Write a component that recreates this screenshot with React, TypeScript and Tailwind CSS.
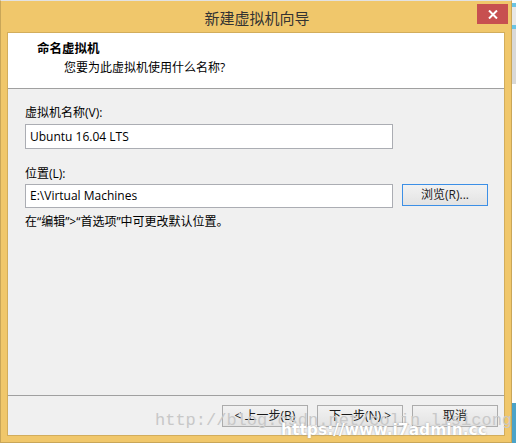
import React from "react";

const font = "font-['Open_Sans','Noto_Sans_CJK_SC',sans-serif]";

function Button({ children, primary }: { children: React.ReactNode; primary?: boolean }) {
  return (
    <button
      className={`h-[22px] w-[86px] border text-[12px] text-[#1a1a1a] bg-gradient-to-b from-[#f2f2f2] to-[#e3e3e3] ${
        primary ? "border-[#3c8fe6]" : "border-[#acacac]"
      }`}
    >
      {children}
    </button>
  );
}

export default function App() {
  return (
    <div className={`relative flex w-[516px] h-[443px] bg-white overflow-hidden ${font}`}>
      {/* Wizard window */}
      <div className="flex flex-col w-[512px] h-[443px] bg-[#f0c76b] border border-[#c9a658] border-t-[#e2e2e2]">
        {/* Title bar */}
        <div className="relative flex items-center justify-center h-[31px] shrink-0">
          <span className="text-[15px] text-[#333] pt-[3px] pl-[2px]">新建虚拟机向导</span>
          <div className="absolute top-[3px] right-[3px] w-[31px] h-[20px] bg-[#c75050] flex items-center justify-center">
            <svg width="10" height="9" viewBox="0 0 10 9">
              <path d="M1 0.5 L9 8.5 M9 0.5 L1 8.5" stroke="white" strokeWidth="2" />
            </svg>
          </div>
        </div>

        {/* Content */}
        <div className="flex flex-col flex-1 mx-[6px] mb-[6px] border border-[#d2ad5c] bg-[#f0f0f0]">
          {/* Header */}
          <div className="h-[56px] shrink-0 bg-white border-b border-[#a0a0a0] pt-[6px]">
            <div className="pl-[29px] text-[12.5px] font-bold text-black leading-[20px]">命名虚拟机</div>
            <div className="pl-[56px] text-[12px] text-black leading-[18px]">您要为此虚拟机使用什么名称?</div>
          </div>

          {/* Body */}
          <div className="flex flex-col flex-1 pl-[17px] pt-[15px]">
            <div className="text-[12px] text-black leading-[18px]">虚拟机名称(V):</div>
            <div className="mt-[2px] w-[368px] h-[25px] bg-white border border-[#abadb3] flex items-center pl-[4px] text-[12px] text-black">
              Ubuntu 16.04 LTS
            </div>

            <div className="mt-[16px] text-[12px] text-black leading-[18px]">位置(L):</div>
            <div className="mt-[1px] flex items-start gap-[9px]">
              <div className="w-[368px] h-[24px] bg-white border border-[#abadb3] flex items-center pl-[4px] text-[12px] text-black">
                E:\Virtual Machines
              </div>
              <Button primary>浏览(R)...</Button>
            </div>
            <div className="mt-[5px] text-[12px] text-black leading-[18px]">在“编辑”&gt;“首选项”中可更改默认位置。</div>
          </div>

          {/* Footer */}
          <div className="h-[40px] shrink-0 border-t border-[#a0a0a0] flex items-start justify-end gap-[9px] pt-[9px] pr-[6px]">
            <Button>&lt; 上一步(B)</Button>
            <Button>下一步(N) &gt;</Button>
            <Button>取消</Button>
          </div>
        </div>
      </div>

      {/* Neighbouring window sliver */}
      <div className="flex flex-col w-[4px]">
        <div className="h-[3px]" />
        <div className="h-[4px] bg-[#6cc4e4]" />
        <div className="h-[18px] bg-[#e8e8e8]" />
        <div className="h-[4px] bg-[#6cc4e4]" />
        <div className="h-[55px] bg-[#d9d9d9]" />
        <div className="flex-1 bg-white" />
        <div className="h-[40px] bg-[#4ba3c8]" />
      </div>

      {/* Watermarks */}
      <div className="absolute left-[155px] top-[411px] font-['Liberation_Mono',monospace] text-[17px] leading-[20px] text-[#c8c8c8] whitespace-nowrap pointer-events-none">
        http://blog.csdn.net/colin_lisicong
      </div>
      <div className="absolute left-[281px] top-[421px] font-['DejaVu_Sans',sans-serif] font-bold text-[15.5px] leading-[18px] text-white whitespace-nowrap pointer-events-none [text-shadow:0_0_2px_#999]">
        https://www.i7admin.cc
      </div>
    </div>
  );
}
